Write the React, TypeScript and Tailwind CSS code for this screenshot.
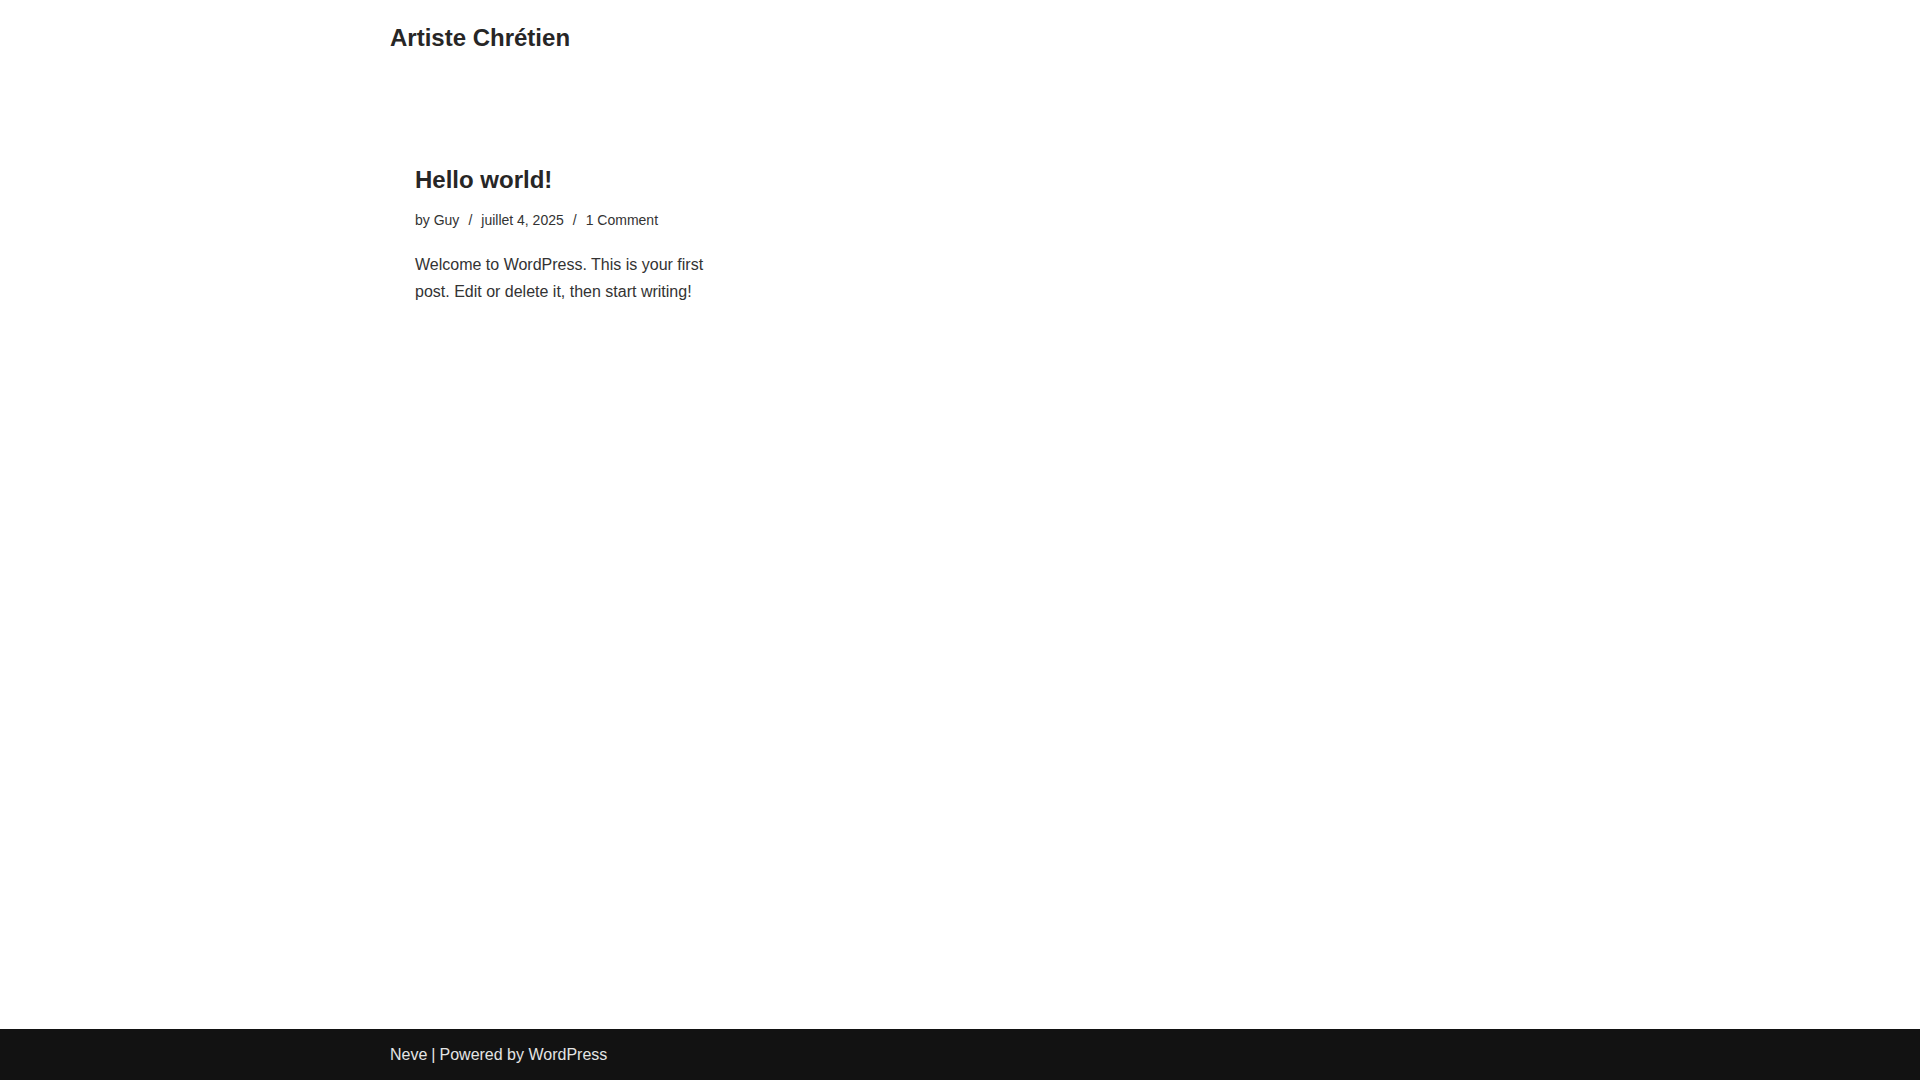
export default function App() {
  return (
    <div
      className="flex min-h-screen flex-col bg-white text-[#272626]"
      style={{ fontFamily: '"Liberation Sans", Arial, sans-serif' }}
    >
      {/* Header */}
      <header className="h-[75px]">
        <div className="mx-auto flex h-full w-[1170px] items-center px-[15px]">
          <a className="text-[24px] font-bold leading-[1.3] text-[#272626]">Artiste Chrétien</a>
        </div>
      </header>

      {/* Posts */}
      <main className="flex-1">
        <div className="mx-auto w-[1170px] px-[15px] pt-[89px]">
          <article className="w-[370px] px-[25px]">
            <h2 className="text-[24px] font-bold leading-[1.3]">Hello world!</h2>
            <div className="mt-[14px] flex items-center text-[14px] leading-[1.6] text-[#333333]">
              <span>
                by <a>Guy</a>
              </span>
              <span className="px-[9px]">/</span>
              <span>juillet 4, 2025</span>
              <span className="px-[9px]">/</span>
              <a>1 Comment</a>
            </div>
            <p className="mt-[19px] text-[16px] leading-[1.7] text-[#333333]">
              Welcome to WordPress. This is your first post. Edit or delete it, then start writing!
            </p>
          </article>
        </div>
      </main>

      {/* Footer */}
      <footer className="h-[51px] bg-[#121212]">
        <div className="mx-auto flex h-full w-[1170px] items-center px-[15px] text-[16px] text-[#e4e4e4]">
          <a>Neve</a>
          <span className="px-[4px]">|</span>
          <span>
            Powered by <a>WordPress</a>
          </span>
        </div>
      </footer>
    </div>
  );
}
